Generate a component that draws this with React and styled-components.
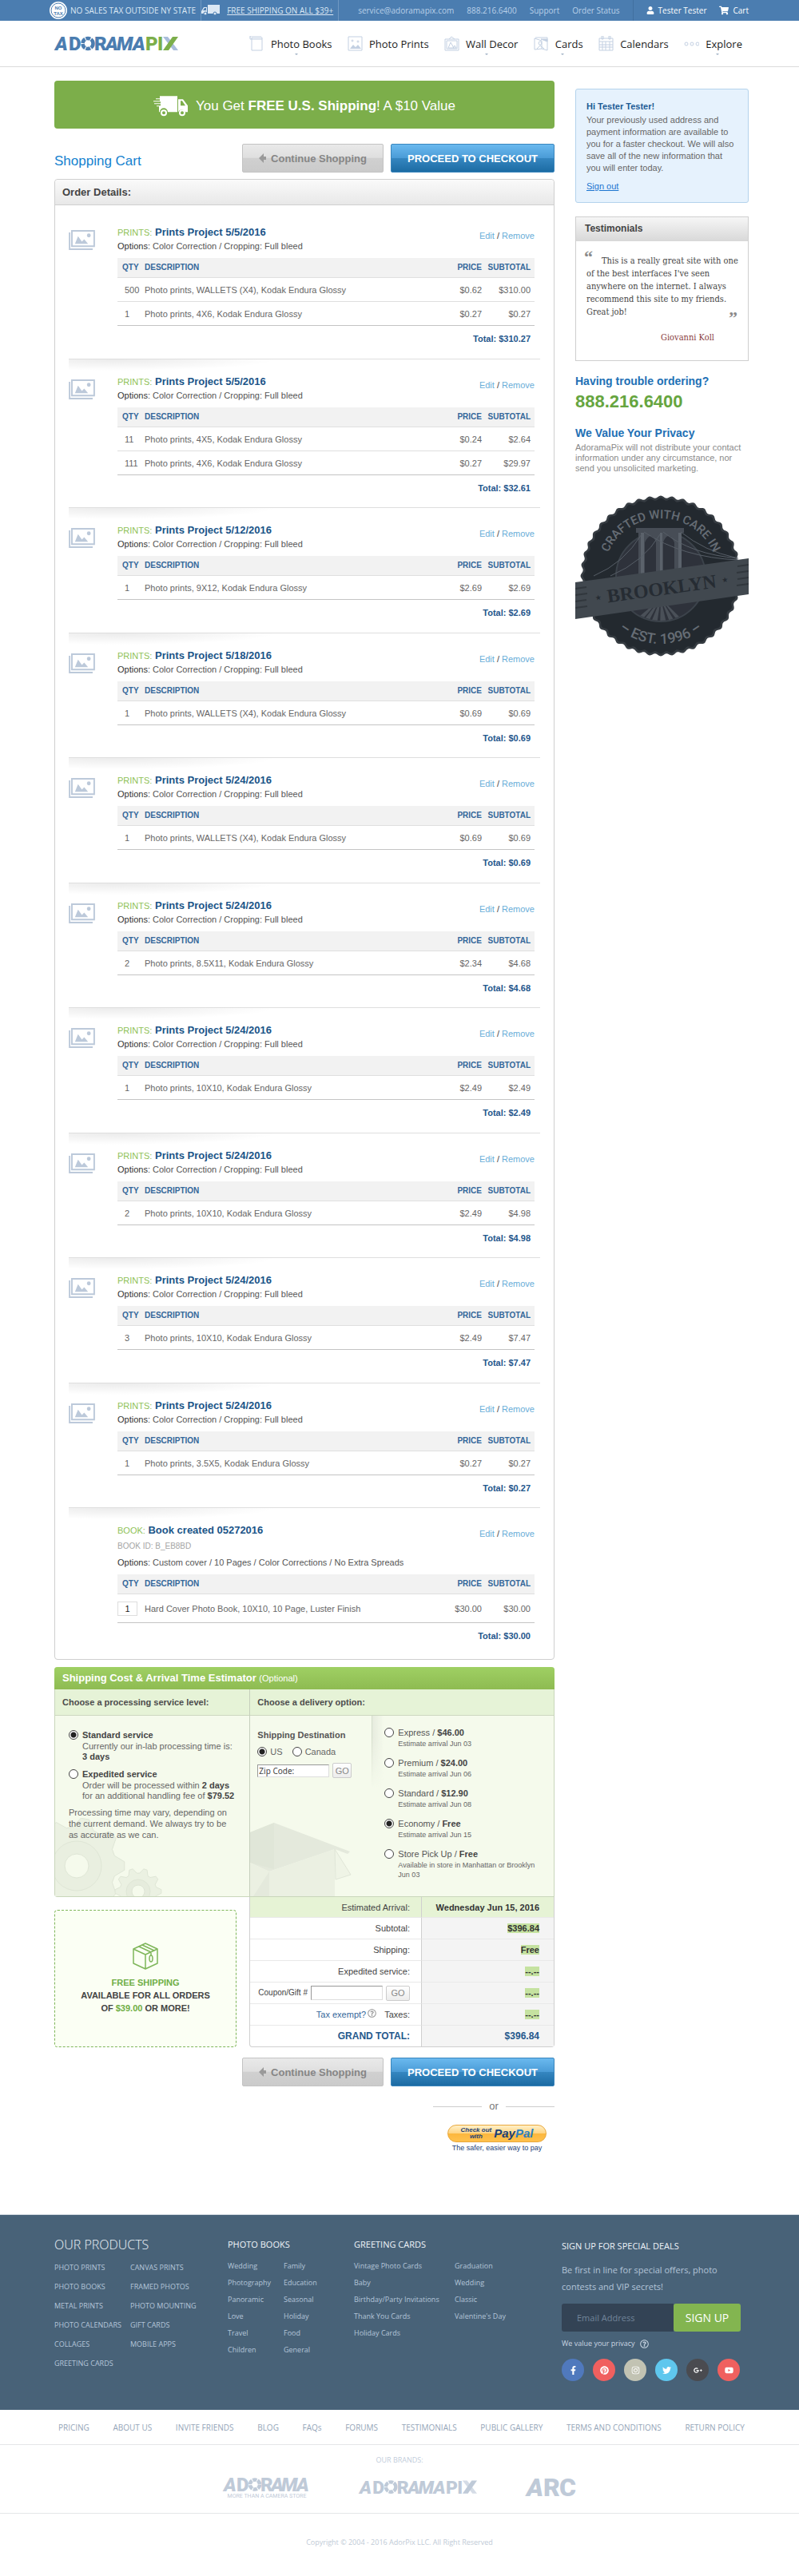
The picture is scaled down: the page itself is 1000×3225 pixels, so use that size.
import React from "react";
import styled, { createGlobalStyle, css } from "styled-components";
import {
  FaFacebookF,
  FaPinterest,
  FaInstagram,
  FaTwitter,
  FaGooglePlusG,
  FaYoutube,
  FaUser,
  FaShoppingCart,
  FaRegQuestionCircle,
} from "react-icons/fa";

const GlobalStyle = createGlobalStyle`
  * {
    box-sizing: border-box;
  }
  body {
    margin: 0;
    background: #fff;
    color: #555;
    font-family: "Liberation Sans", Arial, sans-serif;
    font-size: 11px;
    line-height: 16px;
  }
  a {
    color: inherit;
    text-decoration: none;
  }
  p, h1, h2, h3, ul {
    margin: 0;
    padding: 0;
  }
  ul {
    list-style: none;
  }
  input, button {
    font-family: inherit;
    margin: 0;
  }
`;

const Wrap = styled.div`
  max-width: 1000px;
  margin: 0 auto;
  padding: 0 63px 0 68px;
`;

/* ---------- top bar ---------- */

const TopBar = styled.div`
  background: #4b7db0;
  color: #dce8f4;
  font-family: "Open Sans", "Noto Sans", sans-serif;
  font-size: 10px;
`;
const TopInner = styled(Wrap)`
  display: flex;
  align-items: center;
  height: 26px;
  padding-left: 62px;
`;
const TopPromo = styled.div`
  display: flex;
  align-items: center;
  gap: 4px;
  height: 26px;
  padding-right: 6px;
  border-right: 1px solid #6f98c2;
  white-space: nowrap;
  a {
    margin-left: 4px;
    text-decoration: underline;
  }
`;
const TopLinks = styled.nav`
  display: flex;
  flex: 1;
  align-items: center;
  justify-content: flex-end;
  gap: 16px;
  height: 26px;
  padding-right: 16px;
  border-right: 1px solid #416f9f;
  color: #b9d0e8;
  white-space: nowrap;
`;
const TopUser = styled.div`
  display: flex;
  align-items: center;
  gap: 16px;
  padding-left: 16px;
  color: #fff;
  white-space: nowrap;
  a {
    display: flex;
    align-items: center;
    gap: 5px;
  }
`;

/* ---------- main navigation ---------- */

const NavBar = styled.header`
  border-bottom: 1px solid #dcdcdc;
`;
const NavInner = styled(Wrap)`
  display: flex;
  align-items: center;
  justify-content: space-between;
  height: 57px;
  padding-right: 71px;
`;
const HomeLink = styled.a`
  display: flex;
`;
const NavList = styled.nav`
  display: flex;
  justify-content: space-between;
  flex: 1;
  max-width: 617px;
  margin-left: 80px;
`;
const NavItem = styled.a`
  position: relative;
  display: flex;
  align-items: center;
  gap: 8px;
  color: #1c1c1c;
  font-family: "Open Sans", "Noto Sans", sans-serif;
  font-size: 13px;
  line-height: 20px;
  white-space: nowrap;
  ${(p) =>
    p.$more &&
    css`
      &::after {
        content: "";
        position: absolute;
        left: 55%;
        bottom: -4px;
        border: 2px solid transparent;
        border-top-color: #9fb0c4;
        border-bottom: 0;
      }
    `}
`;

/* ---------- page columns ---------- */

const Columns = styled(Wrap)`
  display: grid;
  grid-template-columns: minmax(0, 1fr) 217px;
  gap: 26px;
  align-items: start;
  padding-top: 17px;
  padding-bottom: 76px;
`;
const Banner = styled.div`
  display: flex;
  align-items: center;
  justify-content: center;
  gap: 9px;
  height: 60px;
  padding-top: 4px;
  border-radius: 4px;
  background: #7cae4a;
  color: #fff;
  font-size: 17px;
  line-height: 20px;
`;
const CartHead = styled.div`
  display: flex;
  justify-content: space-between;
  align-items: center;
  margin: 19px 0 8px;
`;
const PageTitle = styled.h1`
  padding-top: 8px;
  color: #1482cf;
  font-size: 17px;
  font-weight: normal;
  line-height: 20px;
`;
const Buttons = styled.div`
  display: flex;
  justify-content: flex-end;
  gap: 9px;
`;
const BigButton = styled.button`
  display: flex;
  align-items: center;
  justify-content: center;
  gap: 6px;
  width: ${(p) => (p.$primary ? "205px" : "177px")};
  height: 36px;
  padding: 0;
  border: 1px solid ${(p) => (p.$primary ? "#3a86bd" : "#c3c3c3")};
  border-radius: 2px;
  background: ${(p) =>
    p.$primary
      ? "linear-gradient(#6ab9ef, #4a9bd6 50%, #3586c0 51%, #1c6ba3)"
      : "linear-gradient(#e9e9e9, #dfdfdf 48%, #d0d0d0 50%, #cbcbcb)"};
  color: ${(p) => (p.$primary ? "#fff" : "#868686")};
  font-size: 13px;
  font-weight: bold;
  white-space: nowrap;
  cursor: pointer;
`;

/* ---------- order list ---------- */

const OrderPanel = styled.section`
  border: 1px solid #cfcfcf;
  border-radius: 4px;
`;
const OrderHead = styled.h2`
  padding: 8px 9px 7px;
  border-bottom: 1px solid #cfcfcf;
  border-radius: 4px 4px 0 0;
  background: linear-gradient(#fafafa, #e8e8e8);
  color: #444;
  font-size: 13px;
`;
const OrderList = styled.div`
  padding: 6px 17px 4px;
`;
const Item = styled.article`
  display: grid;
  grid-template-columns: 61px minmax(0, 1fr);
  padding: 20px 7px 16px 0;
  &:nth-child(odd) {
    padding-bottom: 17px;
  }
  &:not(:last-child) {
    border-bottom: 1px solid #dedede;
  }
  & + & {
    background: radial-gradient(
        ellipse 200px 14px at 60px 0,
        rgba(0, 0, 0, 0.08),
        transparent
      )
      no-repeat;
  }
`;
const ItemIcon = styled.div`
  padding-top: 5px;
`;
const ItemHead = styled.div`
  display: flex;
  justify-content: space-between;
`;
const ItemTitle = styled.h3`
  color: #1a5488;
  font-size: 13px;
  line-height: 16px;
  span {
    color: #8fc258;
    font-size: 11px;
    font-weight: normal;
  }
`;
const ItemLinks = styled.div`
  padding-top: 4px;
  height: 16px;
  color: #444;
  a {
    color: #67add8;
  }
`;
const BookId = styled.p`
  margin: 4px 0 3px;
  color: #a5a5a5;
  font-size: 10px;
`;
const Options = styled.p`
  padding-top: 1px;
  margin-bottom: 7px;
  color: #555;
  b {
    color: #333;
    font-weight: normal;
  }
`;
const ItemTable = styled.table`
  width: 100%;
  border-spacing: 0;
  table-layout: fixed;
  th,
  td {
    height: 30px;
    padding: 0;
    border-bottom: 1px solid #dfdfdf;
    text-align: left;
  }
  th {
    height: 25px;
    background: #f2f2f2;
    color: #34679a;
    font-size: 10px;
  }
  td {
    color: #666;
  }
  tr:last-child td {
    border-bottom-color: #c4c4c4;
  }
  th:nth-child(1) {
    width: 34px;
    padding-left: 6px;
  }
  td:nth-child(1) {
    padding-left: 9px;
  }
  th:nth-child(3) {
    width: 60px;
  }
  th:nth-child(4) {
    width: 66px;
  }
  th:nth-child(n + 3),
  td:nth-child(n + 3) {
    text-align: right;
  }
  th:nth-child(4),
  td:nth-child(4) {
    padding-right: 5px;
  }
  ${(p) =>
    p.$editable &&
    css`
      td {
        height: 36px;
      }
      td:nth-child(1) {
        padding-left: 0;
      }
    `}
`;
const QtyInput = styled.input`
  display: block;
  width: 25px;
  height: 18px;
  padding: 0;
  border: 1px solid #ddd;
  color: #222;
  font-size: 11px;
  text-align: center;
`;
const ItemTotal = styled.p`
  padding: 8px 5px 0 0;
  color: #1f568c;
  font-weight: bold;
  text-align: right;
`;

/* ---------- estimator ---------- */

const Estimator = styled.section`
  margin-top: 9px;
  border: 1px solid #c9d6bb;
  border-top: 0;
  border-radius: 4px 4px 0 4px;
  background: #f5faec;
`;
const EstimatorTitle = styled.h2`
  margin: 0 -1px;
  padding: 6px 10px;
  border-radius: 4px 4px 0 0;
  background: linear-gradient(#9fd063, #8ebb52);
  color: #fff;
  font-size: 13px;
  line-height: 16px;
  span {
    font-size: 11px;
    font-weight: normal;
  }
`;
const EstimatorGrid = styled.div`
  display: grid;
  grid-template-columns: 39% minmax(0, 1fr);
`;
const EstimatorCol = styled.div`
  position: relative;
  & + & {
    border-left: 1px solid #c6cfbc;
  }
`;
const ColTitle = styled.h3`
  padding: 8px 9px;
  border-bottom: 1px solid #cdd8c0;
  background: #e6f3d7;
  color: #4c4c4c;
  font-size: 11px;
`;
const ColBody = styled.div`
  position: relative;
  display: flex;
  min-height: 226px;
`;
const Watermark = styled.svg`
  position: absolute;
  left: 0;
  bottom: 0;
`;
const Services = styled.div`
  position: relative;
  padding: 16px 16px 0 17px;
  line-height: 13px;
`;
const Choice = styled.div`
  display: grid;
  grid-template-columns: 12px 1fr;
  column-gap: 5px;
  align-items: center;
  margin-bottom: ${(p) => (p.$small ? "10px" : "7px")};
  label {
    color: #555;
    line-height: 16px;
  }
  b {
    color: #444;
  }
  p {
    grid-column: 2;
    color: #666;
    font-size: ${(p) => (p.$small ? "9px" : "11px")};
    line-height: ${(p) => (p.$small ? "12px" : "13px")};
  }
`;
const Radio = styled.input`
  appearance: none;
  width: 12px;
  height: 12px;
  border: 1px solid #444;
  border-radius: 50%;
  background: #fff;
  &:checked {
    background: radial-gradient(#222 3px, #fff 4px);
  }
`;
const ServiceNote = styled.p`
  color: #666;
  line-height: 14px;
`;
const Destination = styled.div`
  position: relative;
  width: 152px;
  padding: 16px 0 0 9px;
`;
const Countries = styled.div`
  display: flex;
  align-items: center;
  gap: 4px;
  margin: 5px 0 6px;
  label {
    margin-right: 8px;
    color: #666;
  }
`;
const GoForm = styled.form`
  display: flex;
  align-items: center;
  gap: 4px;
`;
const TextInput = styled.input`
  width: 90px;
  height: ${(p) => (p.$tall ? "18px" : "16px")};
  padding: 0 1px;
  border: 1px solid #ddd;
  border-top-color: #999;
  border-left-color: #999;
  background: #fff;
  color: #444;
  font-family: "Noto Sans", sans-serif;
  font-size: 10px;
  &::placeholder {
    color: #444;
  }
`;
const GoButton = styled.button`
  width: ${(p) => (p.$wide ? "30px" : "24px")};
  height: 19px;
  padding: 0;
  border: 1px solid #ccc;
  border-radius: 2px;
  background: linear-gradient(#fff, #ececec);
  color: #888;
  font-size: 11px;
`;
const DeliveryOptions = styled.div`
  position: relative;
  flex: 1;
  padding: 13px 12px 0 16px;
  &::before {
    content: "";
    position: absolute;
    left: 0;
    top: 0;
    width: 14px;
    height: 90px;
    border-left: 1px solid #d5ddcb;
    background: linear-gradient(to right, #e6ebde, rgba(245, 250, 236, 0));
    mask-image: linear-gradient(#000 30%, transparent);
  }
`;

/* ---------- summary ---------- */

const SummaryRow = styled.div`
  display: grid;
  grid-template-columns: 39% minmax(0, 1fr);
  margin-bottom: 13px;
`;
const FreeBox = styled.div`
  display: flex;
  flex-direction: column;
  align-items: center;
  justify-content: center;
  gap: 8px;
  margin: 16px 16px 0 0;
  border: 1px dashed #7fb65a;
  border-radius: 4px;
  background: #fbfff4;
  color: #444;
  font-weight: bold;
  text-align: center;
  em {
    color: #6fae45;
    font-style: normal;
  }
`;
const SummaryTable = styled.table`
  width: 100%;
  border: 1px solid #cfcfcf;
  border-top: 0;
  border-radius: 0 0 4px 4px;
  border-spacing: 0;
  th,
  td {
    height: 27px;
    padding: 0 18px 0 0;
    border-bottom: 1px solid #e9e9e9;
    color: #444;
    text-align: right;
  }
  th {
    padding-right: 14px;
    font-weight: normal;
  }
  td {
    width: 166px;
    border-left: 1px solid #cfcfcf;
    background: #f4f4f4;
    color: #333;
    font-weight: bold;
  }
  tr:first-child > * {
    height: 26px;
    background: #e6f3d5;
  }
  tr:last-child > * {
    height: 26px;
    border-bottom: 0;
    background: none;
    color: #24588c;
    font-size: 12px;
    font-weight: bold;
  }
  tr:last-child td {
    background: #f4f4f4;
  }
  mark {
    background: #c5e2a0;
    color: inherit;
  }
`;
const Coupon = styled(GoForm)`
  justify-content: flex-end;
  label {
    font-size: 10px;
  }
`;
const TaxLink = styled.a`
  margin-right: 10px;
  color: #34679a;
  svg {
    margin-left: 2px;
    color: #999;
  }
`;
const PayPalBox = styled.div`
  display: flex;
  flex-direction: column;
  align-items: flex-end;
  width: 152px;
  margin: 17px 0 0 auto;
`;
const PayPal = styled.div`
  padding-right: 10px;
  text-align: center;
`;
const OrLine = styled.div`
  display: flex;
  align-items: center;
  gap: 9px;
  width: 100%;
  margin-bottom: 15px;
  color: #777;
  font-size: 13px;
  &::before,
  &::after {
    content: "";
    flex: 1;
    height: 1px;
    background: #ccc;
  }
`;
const PayPalButton = styled.button`
  display: flex;
  align-items: center;
  justify-content: center;
  gap: 3px;
  width: 124px;
  height: 22px;
  padding: 0;
  border: 1px solid #e9a83b;
  border-radius: 11px;
  background: linear-gradient(#fff0c8, #ffd584 48%, #fcb73e 52%, #ffc14d);
  color: #1b3f77;
  font-size: 8px;
  font-style: italic;
  font-weight: bold;
  line-height: 8px;
  strong {
    font-size: 15px;
    line-height: 16px;
  }
  i {
    color: #2a7fc0;
  }
`;
const PayPalNote = styled.p`
  color: #1b3f77;
  font-size: 9px;
  line-height: 14px;
`;

/* ---------- sidebar ---------- */

const Side = styled.aside`
  padding-top: 10px;
`;
const Hello = styled.div`
  padding: 13px 13px 12px;
  border: 1px solid #b4d3ec;
  border-radius: 3px;
  background: #e6f2fd;
  color: #666;
  line-height: 15px;
  h2 {
    margin-bottom: 2px;
    color: #215b94;
    font-size: 11px;
    line-height: 16px;
  }
  a {
    display: inline-block;
    margin-top: 8px;
    color: #1b75d0;
    text-decoration: underline;
  }
`;
const Testimonials = styled.section`
  margin: 17px 0 15px;
  border: 1px solid #cfcfcf;
  h2 {
    padding: 5px 11px;
    border-bottom: 1px solid #d8d8d8;
    background: linear-gradient(#f6f6f6, #d9d9d9);
    color: #444;
    font-size: 12px;
    line-height: 19px;
  }
`;
const Quote = styled.blockquote`
  position: relative;
  margin: 0;
  padding: 17px 4px 20px 13px;
  color: #444;
  font-family: "DejaVu Serif Condensed", "DejaVu Serif", serif;
  font-size: 11px;
  p {
    text-indent: 19px;
  }
  cite {
    display: block;
    margin-top: 16px;
    padding-right: 38px;
    color: #8a4040;
    font-style: normal;
    text-align: right;
  }
`;
const QuoteMark = styled.span`
  position: absolute;
  top: ${(p) => (p.$end ? "86px" : "10px")};
  ${(p) => (p.$end ? "right: 13px" : "left: 10px")};
  color: #8a8a8a;
  font-family: "Liberation Serif", serif;
  font-size: 22px;
  font-weight: bold;
  line-height: 20px;
`;
const SideTitle = styled.h2`
  color: #2270b5;
  font-size: 14px;
  line-height: 20px;
`;
const Phone = styled.p`
  margin: 3px 0 16px;
  color: #66a53f;
  font-size: 22px;
  font-weight: bold;
  line-height: 26px;
`;
const Privacy = styled.p`
  margin: 2px 0 26px;
  color: #8a8a8a;
  line-height: 13px;
`;

/* ---------- footer ---------- */

const Footer = styled.footer`
  font-family: "Open Sans", "Noto Sans", sans-serif;
`;
const FooterDark = styled.div`
  border-top: 1px solid #d5dde4;
  background: #486278;
  color: #b4c5d8;
  font-size: 9px;
`;
const FooterGrid = styled(Wrap)`
  display: grid;
  grid-template-columns: 217px 158px 260px minmax(0, 1fr);
  min-height: 244px;
  padding-top: 27px;
  padding-right: 73px;
`;
const FooterTitle = styled.h2`
  color: #eef3f8;
  font-size: ${(p) => (p.$big ? "16px" : "11px")};
  font-weight: ${(p) => (p.$big ? 300 : 400)};
  line-height: 20px;
  white-space: nowrap;
`;
const FooterLists = styled.div`
  display: flex;
  margin-top: ${(p) => (p.$loose ? "7px" : "6px")};
  ul {
    width: ${(p) => p.$col};
  }
  li {
    line-height: ${(p) => (p.$loose ? "24px" : "21px")};
    white-space: nowrap;
  }
`;
const SignUp = styled.div`
  padding-top: 2px;
  p {
    margin-top: 9px;
    font-size: 11px;
    line-height: 21px;
  }
`;
const SignUpForm = styled.form`
  display: flex;
  margin: 11px 0 7px;
  input {
    flex: 1;
    min-width: 0;
    height: 35px;
    padding: 0 19px;
    border: 0;
    border-radius: 3px 0 0 3px;
    background: #334355;
    color: #dde6ef;
    font-size: 11px;
  }
  input::placeholder {
    color: #72859a;
  }
  button {
    width: 84px;
    padding: 0;
    border: 0;
    border-radius: 3px;
    background: #83b550;
    color: #fff;
    font-size: 14px;
  }
`;
const PrivacyLink = styled.a`
  display: flex;
  align-items: center;
  gap: 6px;
  color: #c8d5e2;
`;
const Social = styled.div`
  display: flex;
  gap: 11px;
  margin-top: 11px;
`;
const SocialLink = styled.a`
  display: flex;
  align-items: center;
  justify-content: center;
  width: 28px;
  height: 28px;
  border-radius: 50%;
  background: ${(p) => p.$color};
  color: #fff;
  font-size: 11px;
`;
const LinkBar = styled.div`
  border-bottom: 1px solid #e4e6e8;
  nav {
    display: flex;
    justify-content: space-between;
    height: 43px;
    padding: 0 5px;
    align-items: center;
    color: #94a5b8;
    font-size: 10px;
    white-space: nowrap;
  }
`;
const Brands = styled.div`
  height: 86px;
  padding-top: 11px;
  border-bottom: 1px solid #e4e6e8;
  color: #c3cddb;
  font-size: 9px;
  text-align: center;
`;
const BrandRow = styled.div`
  display: flex;
  justify-content: center;
  align-items: center;
  gap: 60px;
  margin-top: 5px;
`;
const Copyright = styled.p`
  padding: 28px 0 34px;
  color: #c0cad6;
  font-size: 9px;
  text-align: center;
`;

/* ---------- drawings ---------- */

const Logo = ({ blue = "#4b7db0", green = "#7cae4a", pale = "#a9bddb", width = 156 }) => (
  <svg width={width} height="32" viewBox="0 -6 156 32" overflow="visible">
    <g fontFamily="Roboto, sans-serif" fontWeight="900" fontSize="24">
      <text x="1" y="18" fill={blue} fontStyle="italic">A</text>
      <text x="18" y="18" fill={blue}>D</text>
      <circle cx="42" cy="9.5" r="6.5" fill="none" stroke={blue} strokeWidth="4.5" strokeDasharray="5.8 1" />
      <text x="50" y="18" fill={blue}>R</text>
      <text x="64" y="18" fill={blue} fontStyle="italic">A</text>
      <text x="78" y="18" fill={blue} fontStyle="italic">M</text>
      <text x="98" y="18" fill={blue} fontStyle="italic">A</text>
      <text x="114" y="18" fill={green}>P</text>
      <text x="129" y="18" fill={green}>I</text>
    </g>
    <path d="M136 1h6l13 17h-6z" fill={pale} />
    <path d="M148 1h7l-12 17h-7z" fill={green} />
  </svg>
);

const Truck = ({ size = 23 }) => (
  <svg width={size} height={size * 0.6} viewBox="0 0 44 26" fill="currentColor">
    <path d="M8 0h22v20H18a5 5 0 0 0-10 0H7V13H4v-1h5v-2H1V9h8V7H0V6h8V4H3V3h5z" />
    <path d="M31 4h6l6 8v8h-3a5 5 0 0 0-9 0zM34 6v6h6l-4-6z" fillRule="evenodd" />
    <circle cx="13" cy="21" r="3" fill="none" stroke="currentColor" strokeWidth="2" />
    <circle cx="36" cy="21" r="3" fill="none" stroke="currentColor" strokeWidth="2" />
  </svg>
);

// boxy van of the top bar, facing left
const Van = () => (
  <svg width="24" height="14" viewBox="0 0 24 14" fill="currentColor">
    <path d="M8 0h15v11H8zM0 8l3-5h4v8H0z" />
    <path d="M2 7l2-3h2v3z" fill="#4b7db0" />
    <circle cx="5" cy="11" r="2" stroke="#4b7db0" />
    <circle cx="17" cy="11" r="2" stroke="#4b7db0" />
  </svg>
);

const NoTax = () => (
  <svg width="22" height="24" viewBox="0 0 22 24">
    <circle cx="11" cy="12" r="11" fill="#fff" />
    <circle cx="11" cy="12" r="9" fill="none" stroke="#4b7db0" />
    <g fill="#4b7db0" fontFamily="Liberation Sans" fontWeight="bold" fontSize="6" textAnchor="middle">
      <text x="11" y="11">NO</text>
      <text x="11" y="18">TAX</text>
    </g>
  </svg>
);

const navIcons = {
  books: <path d="M3 2h13v16H3zM1 2V0h14M1 1v3h15" />,
  prints: (
    <>
      <path d="M1 1h17v17H1z" />
      <path d="M3 16l4-5 3 3 3-3 4 5z" fill="#c3d0e2" stroke="none" />
      <circle cx="6" cy="6" r="1" />
      <circle cx="13" cy="7" r="1" />
    </>
  ),
  wall: (
    <>
      <path d="M1 4h17v14H1zM3 6h13v10H3zM6 4l3-3 4 3" />
      <path d="M5 15l3-7 4 7zM11 15l2-3 2 3z" />
    </>
  ),
  cards: (
    <>
      <path d="M1 3l9 3v10L1 17zM2 2h15v16l-7-2" />
      <path d="M9 4h8v3z" fill="#c3d0e2" />
      <circle cx="8" cy="9" r="2" />
      <path d="M4 16l4-4 5 4" />
    </>
  ),
  calendars: <path d="M1 3h17v15H1zM1 7h17M1 11h17M1 14h17M5 7v11M9 7v11M14 7v11M4 0v4h2V0zM13 0v4h2V0z" />,
  explore: (
    <>
      <circle cx="3" cy="10" r="2" />
      <circle cx="10" cy="10" r="2" />
      <circle cx="17" cy="10" r="2" />
    </>
  ),
};

const NavIcon = ({ name }) => (
  <svg width="19" height="19" viewBox="0 0 19 19" fill="none" stroke="#c3d0e2">
    {navIcons[name]}
  </svg>
);

const PhotoIcon = () => (
  <svg width="33" height="26" viewBox="0 0 34 27" fill="none" stroke="#bcc9da" strokeWidth="2">
    <path d="M4 1h29v20H4zM1 3v22h30" />
    <path d="M8 18l4-10 5 7 3-3 5 6z" fill="#bcc9da" stroke="none" />
    <circle cx="26" cy="7" r="2.5" fill="#bcc9da" stroke="none" />
  </svg>
);

const BoxIcon = () => (
  <svg width="32" height="34" viewBox="0 0 32 34" fill="none" stroke="#7fb65a" strokeWidth="1.5" strokeLinejoin="round">
    <path d="M16 1l15 7v18l-15 7-15-7V8zM1 8l15 7 15-7M16 15v18M8 5l15 7v4M12 3l15 7" />
    <ellipse cx="23" cy="20" rx="2" ry="4" />
  </svg>
);

// outline of a gear with flat teeth
const gearPath = (cx, cy, inner, outer, teeth) => {
  const points = [];
  for (let i = 0; i < teeth * 4; i++) {
    const angle = ((i - 0.5) / (teeth * 4)) * Math.PI * 2;
    const r = i % 4 < 2 ? outer : inner;
    points.push(`${(cx + r * Math.cos(angle)).toFixed(1)} ${(cy + r * Math.sin(angle)).toFixed(1)}`);
  }
  return `M${points.join("L")}Z`;
};

const scallopPath = (cx, cy, r, bumps) => {
  const points = [];
  for (let i = 0; i < bumps * 8; i++) {
    const angle = (i / (bumps * 8)) * Math.PI * 2;
    const d = r + 1.5 * Math.cos(angle * bumps);
    points.push(`${(cx + d * Math.cos(angle)).toFixed(1)} ${(cy + d * Math.sin(angle)).toFixed(1)}`);
  }
  return `M${points.join("L")}Z`;
};

const Gears = () => (
  <Watermark width="136" height="98" viewBox="0 0 136 98" stroke="#dfe6d6" fill="#ebf1e2">
    <path d={gearPath(27, 60, 49, 60, 9)} />
    <circle cx="27" cy="60" r="31" fill="#e9efe0" />
    <circle cx="27" cy="60" r="15" fill="#f5faec" />
    <path d={gearPath(104, 92, 23, 29, 10)} />
    <circle cx="104" cy="92" r="15" fill="#e6ecdd" />
    <circle cx="104" cy="92" r="8" fill="#f5faec" />
  </Watermark>
);

const OpenBox = () => (
  <Watermark width="128" height="92" viewBox="0 0 128 92">
    <path d="M0 12L30 0l95 36-3 3-16-6-82 28L0 50z" fill="#e4e9dc" />
    <path d="M0 12L30 0v58L0 50z" fill="#e0e6d8" />
    <path d="M24 61l82-28v59H0V50z" fill="#ebf0e2" />
    <path d="M106 33l20 32-19 6z" fill="#eff4e6" stroke="#e0e6d8" />
    <path d="M24 61v31H4z" fill="#e4e9dc" />
  </Watermark>
);

const Badge = () => (
  <svg width="100%" viewBox="0 0 217 204">
    <defs>
      <path id="arcTop" d="M35 102a72 72 0 0 1 144 0" />
      <path id="arcBottom" d="M22 102a85 85 0 0 0 170 0" />
      <clipPath id="disc">
        <circle cx="107" cy="103" r="55" />
      </clipPath>
    </defs>
    <path d={scallopPath(107, 102, 99, 44)} fill="#363c42" />
    <path d={scallopPath(107, 102, 96, 44)} fill="#23292f" />
    <circle cx="107" cy="103" r="56" fill="#2e323b" stroke="#3c434b" strokeWidth="2" />
    <g clipPath="url(#disc)">
      <path d="M107 130L60 170h12zM107 130L76 170h10zM107 130L91 170h10zM107 130l-1 40h10zM107 130l15 40h9zM107 130l30 40h10z" fill="#4a5058" />
    </g>
    <g fill="#474d56">
      <path d="M76 42h60v6h-3v60h-9V60q-8-16-14 0v48h-9V60q-6-16-14 0v48h-8V48h-3z" />
    </g>
    <g fill="#5b626b">
      <path d="M82 48h4v60h-4zM106 48h3v60h-3zM129 48h4v60h-4z" />
    </g>
    <g fill="none" stroke="#575e67">
      <path d="M86 47q48 32 118 35M110 47q35 28 94 33M132 47q30 24 68 32M83 50q-22 36-60 52M106 50q-20 34-62 52" />
    </g>
    <g fill="#666d75" fontFamily="Roboto, sans-serif" fontWeight="500" textAnchor="middle">
      <text fontSize="15">
        <textPath href="#arcTop" startOffset="50%">CRAFTED WITH CARE IN</textPath>
      </text>
      <text fontSize="18">
        <textPath href="#arcBottom" startOffset="50%">– EST. 1996 –</textPath>
      </text>
    </g>
    <path d="M0 110L217 80v45L0 156z" fill="#41484f" />
    <path d="M0 118l14-2M0 126l15-2M0 134l14-2M0 142l15-2M217 88l-14 2M217 96l-15 2M217 104l-14 2M217 112l-15 2" stroke="#31373d" strokeWidth="2" />
    <g transform="rotate(-8 108 118)" textAnchor="middle" fill="#262c33">
      <text x="108" y="126" fontFamily="Liberation Serif, serif" fontWeight="bold" fontSize="24">BROOKLYN</text>
      <text x="28" y="121" fontFamily="DejaVu Sans" fontSize="9">★</text>
      <text x="188" y="121" fontFamily="DejaVu Sans" fontSize="9">★</text>
    </g>
  </svg>
);

const Adorama = () => (
  <svg width="110" height="38" viewBox="0 -6 110 38" overflow="visible" fill="#bfcad8" fontFamily="Roboto, sans-serif">
    <g fontWeight="900" fontSize="24">
      <text x="1" y="18" fontStyle="italic">A</text>
      <text x="17" y="18">D</text>
      <circle cx="40" cy="9.5" r="6" fill="none" stroke="#bfcad8" strokeWidth="4.5" strokeDasharray="5.2 1" />
      <text x="47" y="18">R</text>
      <text x="60" y="18" fontStyle="italic">A</text>
      <text x="73" y="18" fontStyle="italic">M</text>
      <text x="92" y="18" fontStyle="italic">A</text>
    </g>
    <text x="55" y="26" fontSize="7" textAnchor="middle">MORE THAN A CAMERA STORE</text>
  </svg>
);

const Arc = () => (
  <svg width="63" height="42" viewBox="0 -8 63 42" overflow="visible" fill="#bfcad8" fontFamily="Roboto, sans-serif" fontWeight="900" fontSize="32">
    <text x="1" y="24" fontStyle="italic">A</text>
    <text x="22" y="24">R</text>
    <text x="42" y="24">C</text>
  </svg>
);

/* ---------- data ---------- */

const glossy = (size) => `Photo prints, ${size}, Kodak Endura Glossy`;

const orders = [
  {
    date: "5/5/2016",
    total: "$310.27",
    rows: [
      ["500", glossy("WALLETS (X4)"), "$0.62", "$310.00"],
      ["1", glossy("4X6"), "$0.27", "$0.27"],
    ],
  },
  {
    date: "5/5/2016",
    total: "$32.61",
    rows: [
      ["11", glossy("4X5"), "$0.24", "$2.64"],
      ["111", glossy("4X6"), "$0.27", "$29.97"],
    ],
  },
  { date: "5/12/2016", total: "$2.69", rows: [["1", glossy("9X12"), "$2.69", "$2.69"]] },
  { date: "5/18/2016", total: "$0.69", rows: [["1", glossy("WALLETS (X4)"), "$0.69", "$0.69"]] },
  { date: "5/24/2016", total: "$0.69", rows: [["1", glossy("WALLETS (X4)"), "$0.69", "$0.69"]] },
  { date: "5/24/2016", total: "$4.68", rows: [["2", glossy("8.5X11"), "$2.34", "$4.68"]] },
  { date: "5/24/2016", total: "$2.49", rows: [["1", glossy("10X10"), "$2.49", "$2.49"]] },
  { date: "5/24/2016", total: "$4.98", rows: [["2", glossy("10X10"), "$2.49", "$4.98"]] },
  { date: "5/24/2016", total: "$7.47", rows: [["3", glossy("10X10"), "$2.49", "$7.47"]] },
  { date: "5/24/2016", total: "$0.27", rows: [["1", glossy("3.5X5"), "$0.27", "$0.27"]] },
];

const delivery = [
  ["Express", "$46.00", "Estimate arrival Jun 03"],
  ["Premium", "$24.00", "Estimate arrival Jun 06"],
  ["Standard", "$12.90", "Estimate arrival Jun 08"],
  ["Economy", "Free", "Estimate arrival Jun 15"],
  ["Store Pick Up", "Free", "Available in store in Manhattan or Brooklyn Jun 03"],
];

const navItems = [
  ["books", "Photo Books", true],
  ["prints", "Photo Prints", false],
  ["wall", "Wall Decor", true],
  ["cards", "Cards", true],
  ["calendars", "Calendars", false],
  ["explore", "Explore", true],
];

const products = [
  ["PHOTO PRINTS", "PHOTO BOOKS", "METAL PRINTS", "PHOTO CALENDARS", "COLLAGES", "GREETING CARDS"],
  ["CANVAS PRINTS", "FRAMED PHOTOS", "PHOTO MOUNTING", "GIFT CARDS", "MOBILE APPS"],
];
const books = [
  ["Wedding", "Photography", "Panoramic", "Love", "Travel", "Children"],
  ["Family", "Education", "Seasonal", "Holiday", "Food", "General"],
];
const cards = [
  ["Vintage Photo Cards", "Baby", "Birthday/Party Invitations", "Thank You Cards", "Holiday Cards"],
  ["Graduation", "Wedding", "Classic", "Valentine's Day"],
];
const footerLinks = [
  "PRICING",
  "ABOUT US",
  "INVITE FRIENDS",
  "BLOG",
  "FAQs",
  "FORUMS",
  "TESTIMONIALS",
  "PUBLIC GALLERY",
  "TERMS AND CONDITIONS",
  "RETURN POLICY",
];
const socials = [
  ["Facebook", "#5079bd", FaFacebookF],
  ["Pinterest", "#f0605f", FaPinterest],
  ["Instagram", "#c2c3b3", FaInstagram],
  ["Twitter", "#5fc7ee", FaTwitter],
  ["Google Plus", "#4a4b50", FaGooglePlusG],
  ["YouTube", "#f0605f", FaYoutube],
];

/* ---------- parts ---------- */

const CartButtons = () => (
  <Buttons>
    <BigButton type="button">
      <svg width="9" height="12" viewBox="0 0 9 12" fill="#9a9a9a">
        <path d="M0 6l6-6v4h3v4H6v4z" />
      </svg>
      Continue Shopping
    </BigButton>
    <BigButton type="button" $primary>
      PROCEED TO CHECKOUT
    </BigButton>
  </Buttons>
);

const OrderItem = ({ kind, title, bookId, options, rows, total }) => (
  <Item>
    <ItemIcon>{!bookId && <PhotoIcon />}</ItemIcon>
    <div>
      <ItemHead>
        <ItemTitle>
          <span>{kind}:</span> {title}
        </ItemTitle>
        <ItemLinks>
          <a href="#edit">Edit</a> / <a href="#remove">Remove</a>
        </ItemLinks>
      </ItemHead>
      {bookId && <BookId>BOOK ID: {bookId}</BookId>}
      <Options>
        <b>Options</b>: {options}
      </Options>
      <ItemTable $editable={!!bookId}>
        <thead>
          <tr>
            <th>QTY</th>
            <th>DESCRIPTION</th>
            <th>PRICE</th>
            <th>SUBTOTAL</th>
          </tr>
        </thead>
        <tbody>
          {rows.map(([qty, desc, price, sub]) => (
            <tr key={desc}>
              <td>{bookId ? <QtyInput defaultValue={qty} aria-label="Quantity" /> : qty}</td>
              <td>{desc}</td>
              <td>{price}</td>
              <td>{sub}</td>
            </tr>
          ))}
        </tbody>
      </ItemTable>
      <ItemTotal>Total: {total}</ItemTotal>
    </div>
  </Item>
);

const LinkLists = ({ lists, col, loose }) => (
  <FooterLists $col={col} $loose={loose}>
    {lists.map((list, i) => (
      <ul key={i}>
        {list.map((name) => (
          <li key={name}>
            <a href="#link">{name}</a>
          </li>
        ))}
      </ul>
    ))}
  </FooterLists>
);

const App = () => {
  return (
    <div>
      <GlobalStyle />
      <TopBar>
        <TopInner>
          <TopPromo>
            <NoTax />
            NO SALES TAX OUTSIDE NY STATE
          </TopPromo>
          <TopPromo>
            <Van />
            <a href="#shipping">FREE SHIPPING ON ALL $39+</a>
          </TopPromo>
          <TopLinks>
            <a href="#mail">service@adoramapix.com</a>
            <a href="#phone">888.216.6400</a>
            <a href="#support">Support</a>
            <a href="#status">Order Status</a>
          </TopLinks>
          <TopUser>
            <a href="#account">
              <FaUser /> Tester Tester
            </a>
            <a href="#cart">
              <FaShoppingCart size={12} /> Cart
            </a>
          </TopUser>
        </TopInner>
      </TopBar>

      <NavBar>
        <NavInner>
          <HomeLink href="#home" aria-label="AdoramaPix">
            <Logo />
          </HomeLink>
          <NavList>
            {navItems.map(([icon, name, more]) => (
              <NavItem key={name} href="#nav" $more={more}>
                <NavIcon name={icon} />
                {name}
              </NavItem>
            ))}
          </NavList>
        </NavInner>
      </NavBar>

      <Columns>
        <main>
          <Banner>
            <Truck size={44} />
            <span>
              You Get <b>FREE U.S. Shipping</b>! A $10 Value
            </span>
          </Banner>
          <CartHead>
            <PageTitle>Shopping Cart</PageTitle>
            <CartButtons />
          </CartHead>

          <OrderPanel>
            <OrderHead>Order Details:</OrderHead>
            <OrderList>
              {orders.map((order, i) => (
                <OrderItem
                  key={i}
                  kind="PRINTS"
                  title={`Prints Project ${order.date}`}
                  options="Color Correction / Cropping: Full bleed"
                  rows={order.rows}
                  total={order.total}
                />
              ))}
              <OrderItem
                kind="BOOK"
                title="Book created 05272016"
                bookId="B_EB8BD"
                options="Custom cover / 10 Pages / Color Corrections / No Extra Spreads"
                rows={[["1", "Hard Cover Photo Book, 10X10, 10 Page, Luster Finish", "$30.00", "$30.00"]]}
                total="$30.00"
              />
            </OrderList>
          </OrderPanel>

          <Estimator>
            <EstimatorTitle>
              Shipping Cost &amp; Arrival Time Estimator <span>(Optional)</span>
            </EstimatorTitle>
            <EstimatorGrid>
              <EstimatorCol>
                <ColTitle>Choose a processing service level:</ColTitle>
                <ColBody>
                  <Gears />
                  <Services>
                    <Choice>
                      <Radio type="radio" name="service" id="standard" defaultChecked />
                      <label htmlFor="standard">
                        <b>Standard service</b>
                      </label>
                      <p>
                        Currently our in-lab processing time is: <b>3 days</b>
                      </p>
                    </Choice>
                    <Choice>
                      <Radio type="radio" name="service" id="expedited" />
                      <label htmlFor="expedited">
                        <b>Expedited service</b>
                      </label>
                      <p>
                        Order will be processed within <b>2 days</b> for an additional handling fee of <b>$79.52</b>
                      </p>
                    </Choice>
                    <ServiceNote>
                      Processing time may vary, depending on the current demand. We always try to be as accurate as we
                      can.
                    </ServiceNote>
                  </Services>
                </ColBody>
              </EstimatorCol>
              <EstimatorCol>
                <ColTitle>Choose a delivery option:</ColTitle>
                <ColBody>
                  <OpenBox />
                  <Destination>
                    <b>Shipping Destination</b>
                    <Countries>
                      <Radio type="radio" name="country" id="us" defaultChecked />
                      <label htmlFor="us">US</label>
                      <Radio type="radio" name="country" id="canada" />
                      <label htmlFor="canada">Canada</label>
                    </Countries>
                    <GoForm>
                      <TextInput placeholder="Zip Code:" aria-label="Zip Code" />
                      <GoButton type="button">GO</GoButton>
                    </GoForm>
                  </Destination>
                  <DeliveryOptions>
                    {delivery.map(([name, price, note]) => (
                      <Choice key={name} $small>
                        <Radio type="radio" name="delivery" id={name} defaultChecked={name === "Economy"} />
                        <label htmlFor={name}>
                          {name} / <b>{price}</b>
                        </label>
                        <p>{note}</p>
                      </Choice>
                    ))}
                  </DeliveryOptions>
                </ColBody>
              </EstimatorCol>
            </EstimatorGrid>
          </Estimator>

          <SummaryRow>
            <FreeBox>
              <BoxIcon />
              <p>
                <em>FREE SHIPPING</em>
                <br />
                AVAILABLE FOR ALL ORDERS
                <br />
                OF <em>$39.00</em> OR MORE!
              </p>
            </FreeBox>
            <SummaryTable>
              <tbody>
                <tr>
                  <th>Estimated Arrival:</th>
                  <td>Wednesday Jun 15, 2016</td>
                </tr>
                <tr>
                  <th>Subtotal:</th>
                  <td>
                    <mark>$396.84</mark>
                  </td>
                </tr>
                <tr>
                  <th>Shipping:</th>
                  <td>
                    <mark>Free</mark>
                  </td>
                </tr>
                <tr>
                  <th>Expedited service:</th>
                  <td>
                    <mark>--.--</mark>
                  </td>
                </tr>
                <tr>
                  <th>
                    <Coupon>
                      <label htmlFor="coupon">Coupon/Gift #</label>
                      <TextInput id="coupon" $tall />
                      <GoButton type="button" $wide>
                        GO
                      </GoButton>
                    </Coupon>
                  </th>
                  <td>
                    <mark>--.--</mark>
                  </td>
                </tr>
                <tr>
                  <th>
                    <TaxLink href="#tax">
                      Tax exempt?
                      <FaRegQuestionCircle />
                    </TaxLink>
                    Taxes:
                  </th>
                  <td>
                    <mark>--.--</mark>
                  </td>
                </tr>
                <tr>
                  <th>GRAND TOTAL:</th>
                  <td>$396.84</td>
                </tr>
              </tbody>
            </SummaryTable>
          </SummaryRow>
          <CartButtons />
          <PayPalBox>
            <OrLine>or</OrLine>
            <PayPal>
              <PayPalButton type="button">
                <span>
                  Check out
                  <br />
                  with
                </span>
                <strong>
                  Pay<i>Pal</i>
                </strong>
              </PayPalButton>
              <PayPalNote>The safer, easier way to pay</PayPalNote>
            </PayPal>
          </PayPalBox>
        </main>

        <Side>
          <Hello>
            <h2>Hi Tester Tester!</h2>
            <p>
              Your previously used address and payment information are available to you for a faster checkout. We will
              also save all of the new information that you will enter today.
            </p>
            <a href="#signout">Sign out</a>
          </Hello>
          <Testimonials>
            <h2>Testimonials</h2>
            <Quote>
              <QuoteMark>“</QuoteMark>
              <p>
                This is a really great site with one of the best interfaces I've seen anywhere on the internet. I always
                recommend this site to my friends. Great job!
              </p>
              <QuoteMark $end>”</QuoteMark>
              <cite>Giovanni Koll</cite>
            </Quote>
          </Testimonials>
          <SideTitle>Having trouble ordering?</SideTitle>
          <Phone>888.216.6400</Phone>
          <SideTitle>We Value Your Privacy</SideTitle>
          <Privacy>
            AdoramaPix will not distribute your contact information under any circumstance, nor send you unsolicited
            marketing.
          </Privacy>
          <Badge />
        </Side>
      </Columns>

      <Footer>
        <FooterDark>
          <FooterGrid>
            <div>
              <FooterTitle $big>OUR PRODUCTS</FooterTitle>
              <LinkLists lists={products} col="95px" loose />
            </div>
            <div>
              <FooterTitle>PHOTO BOOKS</FooterTitle>
              <LinkLists lists={books} col="70px" />
            </div>
            <div>
              <FooterTitle>GREETING CARDS</FooterTitle>
              <LinkLists lists={cards} col="126px" />
            </div>
            <SignUp>
              <FooterTitle>SIGN UP FOR SPECIAL DEALS</FooterTitle>
              <p>Be first in line for special offers, photo contests and VIP secrets!</p>
              <SignUpForm>
                <input type="email" placeholder="Email Address" aria-label="Email Address" />
                <button type="button">SIGN UP</button>
              </SignUpForm>
              <PrivacyLink href="#privacy">
                We value your privacy <FaRegQuestionCircle size={11} />
              </PrivacyLink>
              <Social>
                {socials.map(([name, color, Icon]) => (
                  <SocialLink key={name} href="#social" aria-label={name} $color={color}>
                    <Icon />
                  </SocialLink>
                ))}
              </Social>
            </SignUp>
          </FooterGrid>
        </FooterDark>
        <LinkBar>
          <Wrap>
            <nav>
              {footerLinks.map((name) => (
                <a key={name} href="#footer">
                  {name}
                </a>
              ))}
            </nav>
          </Wrap>
        </LinkBar>
        <Brands>
          OUR BRANDS:
          <BrandRow>
            <Adorama />
            <Logo blue="#bfcad8" green="#bfcad8" pale="#d5dce6" width={149} />
            <Arc />
          </BrandRow>
        </Brands>
        <Copyright>Copyright © 2004 - 2016 AdorPix LLC. All Right Reserved</Copyright>
      </Footer>
    </div>
  );
};

export default App;
